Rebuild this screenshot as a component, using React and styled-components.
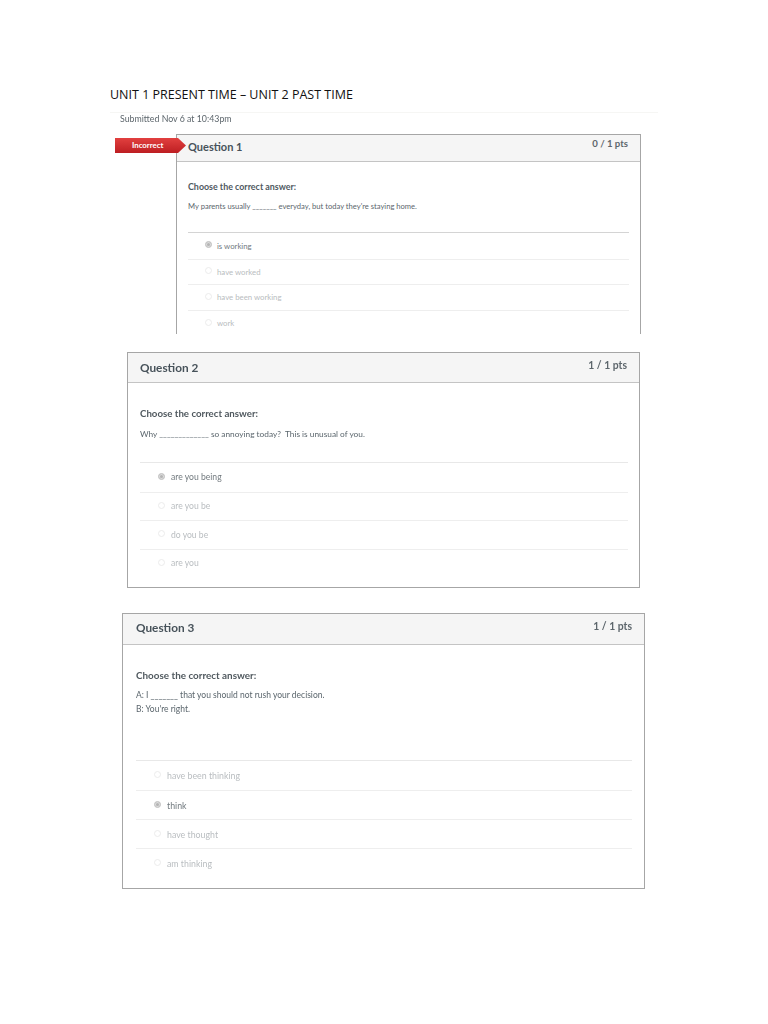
import React from "react";
import styled, { createGlobalStyle } from "styled-components";

const GlobalStyle = createGlobalStyle`
  html, body {
    margin: 0;
    padding: 0;
    background: #ffffff;
  }
`;

const Page = styled.main`
  width: 768px;
  height: 1024px;
  padding-top: 86px;
  box-sizing: border-box;
  overflow: hidden;
  font-family: Lato, "Open Sans", sans-serif;
`;

const Heading = styled.h1`
  margin: 0 0 0 110px;
  font: 400 12.5px/17px "Open Sans", "Noto Sans", sans-serif;
  color: #111111;
`;

const Submitted = styled.div`
  margin: 9px 0 0 110px;
  width: 548px;
  height: 22px;
  box-sizing: border-box;
  padding: 0 0 0 10px;
  border-top: 1px solid #f6f6f4;
  font-size: 8.8px;
  line-height: 11px;
  color: #5d666c;
  filter: blur(0.3px);
`;

const SubmittedText = styled.span`
  display: block;
  padding-top: 0;
`;

const Card = styled.section`
  position: relative;
  box-sizing: border-box;
  margin-left: ${(p) => p.$left}px;
  margin-top: ${(p) => p.$top}px;
  width: ${(p) => p.$width}px;
  height: ${(p) => p.$height}px;
  background: #ffffff;
  border: 1px solid #a6a6a6;
  border-bottom: ${(p) => (p.$cut ? "none" : "1px solid #a6a6a6")};
  filter: blur(0.3px);
`;

const CardHeader = styled.header`
  box-sizing: border-box;
  height: ${(p) => p.$height}px;
  padding: 0 ${(p) => p.$right}px 0 ${(p) => p.$pad}px;
  display: flex;
  justify-content: space-between;
  background: #f5f5f5;
  border-bottom: 1px solid #c4c4c4;
`;

const Title = styled.h2`
  margin: ${(p) => p.$offset}px 0 0;
  font-size: ${(p) => p.$size}px;
  line-height: 14px;
  font-weight: 700;
  color: #47525a;
`;

const Points = styled.span`
  margin-top: ${(p) => p.$offset}px;
  font-size: ${(p) => p.$size}px;
  line-height: 14px;
  font-weight: 700;
  color: #5d666c;
`;

const Badge = styled.div`
  position: absolute;
  left: -62px;
  top: 3px;
  width: 71px;
  height: 15px;
  box-sizing: border-box;
  padding-left: 17px;
  background: linear-gradient(#e2403f, #bd1e22);
  clip-path: polygon(0 0, 63px 0, 100% 50%, 63px 100%, 0 100%);
  color: #ffffff;
  font-size: 7.8px;
  font-weight: 700;
  line-height: 15px;
`;

const Body = styled.div`
  padding: ${(p) => p.$top}px ${(p) => p.$right}px 0 ${(p) => p.$pad}px;
`;

const Prompt = styled.p`
  margin: 0;
  font-size: ${(p) => p.$size}px;
  line-height: 14px;
  font-weight: 700;
  color: #50595f;
`;

const Sentence = styled.div`
  margin-top: ${(p) => p.$gap}px;
  height: ${(p) => p.$height}px;
  font-size: ${(p) => p.$size}px;
  line-height: 14px;
  color: #5b666d;
  white-space: pre;
`;

const Options = styled.ul`
  margin: 0;
  padding: 0;
  list-style: none;
  border-top: 1px solid ${(p) => p.$rule};
`;

const Option = styled.li`
  box-sizing: border-box;
  height: ${(p) => p.$height}px;
  padding-left: ${(p) => p.$indent}px;
  display: flex;
  align-items: center;
  gap: ${(p) => p.$gap}px;
  border-top: ${(p) => (p.$first ? "none" : "1px solid #eeeeee")};
  font-size: ${(p) => p.$size}px;
  color: ${(p) => (p.$selected ? "#727a7f" : "#b9bdc0")};
`;

const Radio = styled.span`
  flex: none;
  width: 7px;
  height: 7px;
  box-sizing: border-box;
  border-radius: 50%;
  margin-top: -2px;
  border: 1px solid ${(p) => (p.$selected ? "#c8c8c8" : "#ececec")};
  background: ${(p) => (p.$selected ? "#b4b4b4" : "#ffffff")};
  box-shadow: ${(p) => (p.$selected ? "inset 0 0 0 1px #dddddd" : "none")};
`;

const quizzes = [
  {
    title: "Question 1",
    points: "0 / 1 pts",
    incorrect: true,
    cut: true,
    card: { $left: 176, $top: 0, $width: 465, $height: 200 },
    header: { $height: 27, $pad: 11, $right: 12 },
    titleStyle: { $offset: 5, $size: 11 },
    pointsStyle: { $offset: 2, $size: 9.6 },
    body: { $top: 18, $pad: 11, $right: 11 },
    promptSize: 8.9,
    sentence: { $gap: 5, $height: 33, $size: 7.6 },
    lines: ["My parents usually _______ everyday, but today they're staying home."],
    rule: "#d4d4d4",
    option: { $height: 25.6, $indent: 17, $gap: 5, $size: 7.8 },
    answers: ["is working", "have worked", "have been working", "work"],
    selected: 0,
  },
  {
    title: "Question 2",
    points: "1 / 1 pts",
    card: { $left: 127, $top: 18, $width: 513, $height: 236 },
    header: { $height: 30, $pad: 12, $right: 12 },
    titleStyle: { $offset: 8, $size: 11.8 },
    pointsStyle: { $offset: 5, $size: 10.4 },
    body: { $top: 23, $pad: 12, $right: 11 },
    promptSize: 9.7,
    sentence: { $gap: 7, $height: 35, $size: 8.3 },
    lines: ["Why _____________ so annoying today?  This is unusual of you."],
    rule: "#e8e8e8",
    option: { $height: 28.5, $indent: 18, $gap: 6, $size: 8.6 },
    answers: ["are you being", "are you be", "do you be", "are you"],
    selected: 0,
  },
  {
    title: "Question 3",
    points: "1 / 1 pts",
    card: { $left: 122, $top: 25, $width: 523, $height: 276 },
    header: { $height: 31, $pad: 13, $right: 12 },
    titleStyle: { $offset: 7, $size: 11.8 },
    pointsStyle: { $offset: 5, $size: 10.4 },
    body: { $top: 23, $pad: 13, $right: 12 },
    promptSize: 9.9,
    sentence: { $gap: 6, $height: 72, $size: 8.5 },
    lines: ["A: I _______ that you should not rush your decision.", "B: You're right."],
    rule: "#e8e8e8",
    option: { $height: 29, $indent: 18, $gap: 6, $size: 8.8 },
    answers: ["have been thinking", "think", "have thought", "am thinking"],
    selected: 1,
  },
];

function QuizCard({ quiz }) {
  return (
    <Card {...quiz.card} $cut={quiz.cut}>
      {quiz.incorrect && <Badge>Incorrect</Badge>}
      <CardHeader {...quiz.header}>
        <Title {...quiz.titleStyle}>{quiz.title}</Title>
        <Points {...quiz.pointsStyle}>{quiz.points}</Points>
      </CardHeader>
      <Body {...quiz.body}>
        <Prompt $size={quiz.promptSize}>Choose the correct answer:</Prompt>
        <Sentence {...quiz.sentence}>
          {quiz.lines.map((line) => (
            <div key={line}>{line}</div>
          ))}
        </Sentence>
        <Options $rule={quiz.rule}>
          {quiz.answers.map((answer, i) => (
            <Option
              key={answer}
              {...quiz.option}
              $first={i === 0}
              $selected={i === quiz.selected}
            >
              <Radio $selected={i === quiz.selected} />
              {answer}
            </Option>
          ))}
        </Options>
      </Body>
    </Card>
  );
}

export default function App() {
  return (
    <Page>
      <GlobalStyle />
      <Heading>UNIT 1 PRESENT TIME – UNIT 2 PAST TIME</Heading>
      <Submitted>
        <SubmittedText>Submitted Nov 6 at 10:43pm</SubmittedText>
      </Submitted>
      {quizzes.map((quiz) => (
        <QuizCard key={quiz.title} quiz={quiz} />
      ))}
    </Page>
  );
}
